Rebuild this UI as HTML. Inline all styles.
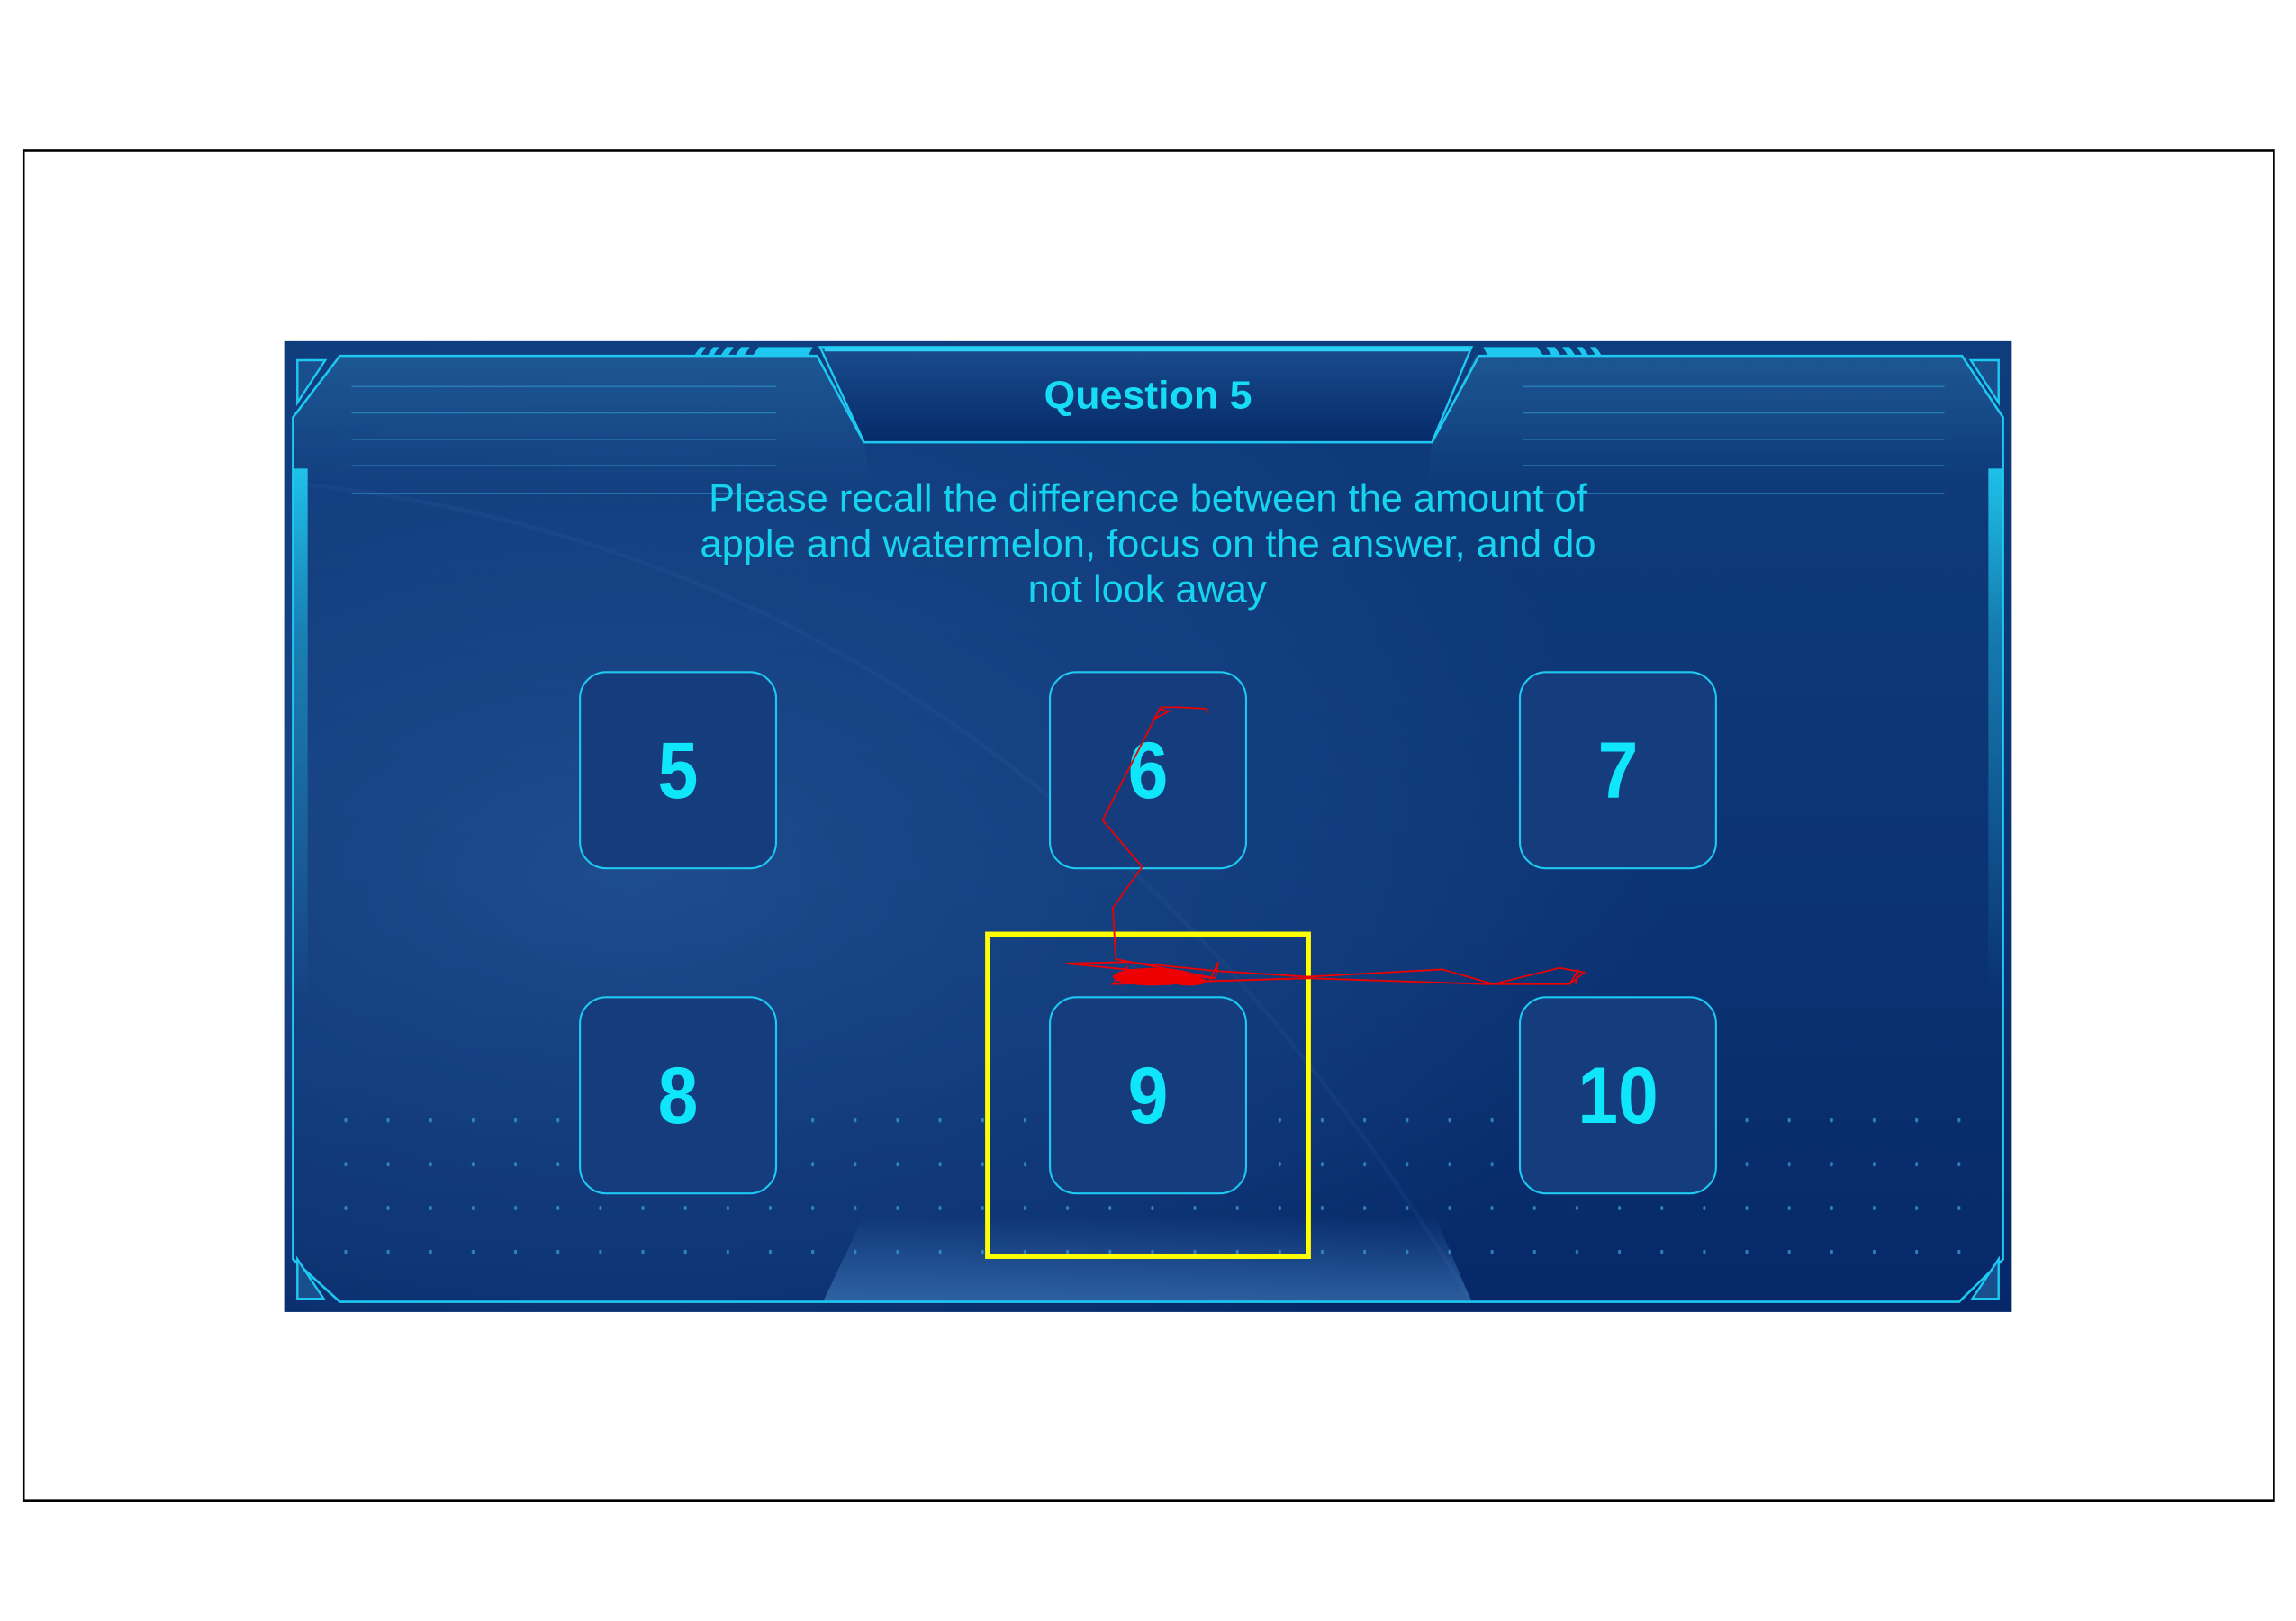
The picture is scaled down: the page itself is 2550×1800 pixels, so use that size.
<!DOCTYPE html>
<html><head><meta charset="utf-8"><style>
html,body{margin:0;padding:0;background:#fff;}
svg{display:block;}
</style></head><body>
<svg width="2550" height="1800" viewBox="0 0 1568 1107" xmlns="http://www.w3.org/2000/svg">
<defs>
<linearGradient id="bg" x1="0" y1="0" x2="0" y2="1">
<stop offset="0" stop-color="#0f3c7c"/><stop offset="0.6" stop-color="#0b3373"/><stop offset="1" stop-color="#062868"/>
</linearGradient>
<radialGradient id="planet" cx="0.2" cy="0.55" r="0.6">
<stop offset="0" stop-color="#2a5c9c" stop-opacity="0.6"/><stop offset="0.7" stop-color="#1d4b8c" stop-opacity="0.35"/><stop offset="1" stop-color="#1d4b8c" stop-opacity="0"/>
</radialGradient>
<linearGradient id="wing" x1="0" y1="0" x2="0" y2="1">
<stop offset="0" stop-color="#2a72a8" stop-opacity="0.5"/><stop offset="1" stop-color="#2a72a8" stop-opacity="0"/>
</linearGradient>
<linearGradient id="bar" x1="0" y1="0" x2="0" y2="1">
<stop offset="0" stop-color="#1fd0f5" stop-opacity="0.9"/><stop offset="0.3" stop-color="#1fd0f5" stop-opacity="0.45"/><stop offset="1" stop-color="#1fd0f5" stop-opacity="0"/>
</linearGradient>
<linearGradient id="glow" x1="0" y1="0" x2="0" y2="1">
<stop offset="0" stop-color="#4a8acb" stop-opacity="0"/><stop offset="1" stop-color="#4a8acb" stop-opacity="0.55"/>
</linearGradient>
<linearGradient id="tab" x1="0" y1="0" x2="0" y2="1">
<stop offset="0" stop-color="#1a4c8c"/><stop offset="1" stop-color="#062a6a"/>
</linearGradient>
<pattern id="dots" x="235" y="0" width="29" height="30" patternUnits="userSpaceOnUse">
<ellipse cx="1" cy="15" rx="1" ry="1.6" fill="#3fa6d8" opacity="0.7"/>
</pattern>
</defs>

<rect x="16" y="103" width="1537" height="922" fill="#fff" stroke="#000" stroke-width="1.6"/>

<rect x="194" y="233" width="1180" height="663" fill="url(#bg)"/>
<rect x="194" y="233" width="1180" height="663" fill="url(#planet)"/>
<path d="M200 330 Q700 380 1005 889" fill="none" stroke="#3a6cab" stroke-width="3" opacity="0.12"/>

<rect x="230" y="750" width="1110" height="120" fill="url(#dots)"/>

<polygon points="232,243 558,243 590,302 595,330 200,330 200,285" fill="url(#wing)"/>
<polygon points="1008,243 1340,243 1368,285 1368,330 975,330 978,302" fill="url(#wing)"/>

<g stroke="#2b86bc" stroke-width="1" opacity="0.8">
<line x1="240" y1="264" x2="530" y2="264"/><line x1="240" y1="282" x2="530" y2="282"/>
<line x1="240" y1="300" x2="530" y2="300"/><line x1="240" y1="318" x2="530" y2="318"/>
<line x1="240" y1="337" x2="530" y2="337"/>
<line x1="1040" y1="264" x2="1328" y2="264"/><line x1="1040" y1="282" x2="1328" y2="282"/>
<line x1="1040" y1="300" x2="1328" y2="300"/><line x1="1040" y1="318" x2="1328" y2="318"/>
<line x1="1040" y1="337" x2="1328" y2="337"/>
</g>

<polygon points="590,830 980,830 1005,889 562,889" fill="url(#glow)"/>

<polygon points="232,243 558,243 590,302 978,302 1010,243 1340,243 1368,285 1368,860 1338,889 232,889 200,860 200,285" fill="none" stroke="#1ec8f0" stroke-width="1.6"/>
<rect x="200" y="320" width="10" height="360" fill="url(#bar)"/>
<rect x="1358" y="320" width="10" height="360" fill="url(#bar)"/>

<g fill="#1a4f8e" stroke="#1ec8f0" stroke-width="1.5">
<polygon points="203,246 222,246 203,275"/>
<polygon points="203,860 203,887 221,887"/>
<polygon points="1365,246 1346,246 1365,275"/>
<polygon points="1365,860 1365,887 1347,887"/>
</g>

<g fill="#1ec8f0">
<polygon points="478,237 482,237 478,243 474,243"/>
<polygon points="487,237 491,237 487,243 483,243"/>
<polygon points="496,237 501,237 497,243 492,243"/>
<polygon points="506,237 512,237 508,243 502,243"/>
<polygon points="518,237 555,237 552,243 514,243"/>
<polygon points="1013,237 1050,237 1054,243 1016,243"/>
<polygon points="1056,237 1062,237 1066,243 1060,243"/>
<polygon points="1067,237 1072,237 1076,243 1071,243"/>
<polygon points="1077,237 1081,237 1085,243 1081,243"/>
<polygon points="1086,237 1090,237 1094,243 1090,243"/>
</g>

<polygon points="560,237 1005,237 978,302 590,302" fill="url(#tab)" stroke="#1ec8f0" stroke-width="1.5"/>
<line x1="563" y1="238.5" x2="1003" y2="238.5" stroke="#2bd0f5" stroke-width="3"/>
<text x="713" y="279" textLength="142" lengthAdjust="spacingAndGlyphs" font-family="Liberation Sans, sans-serif" font-weight="bold" font-size="27" fill="#16dcf5">Question 5</text>

<g font-family="Liberation Sans, sans-serif" font-size="26" fill="#16d4f0" lengthAdjust="spacingAndGlyphs">
<text x="484" y="349" textLength="600" lengthAdjust="spacingAndGlyphs">Please recall the difference between the amount of</text>
<text x="478" y="380" textLength="612" lengthAdjust="spacingAndGlyphs">apple and watermelon, focus on the answer, and do</text>
<text x="702" y="411" textLength="163" lengthAdjust="spacingAndGlyphs">not look away</text>
</g>

<g fill="#153d7e" stroke="#1ec8f0" stroke-width="1.3">
<rect x="396" y="459" width="134" height="134" rx="18"/>
<rect x="717" y="459" width="134" height="134" rx="18"/>
<rect x="1038" y="459" width="134" height="134" rx="18"/>
<rect x="396" y="681" width="134" height="134" rx="18"/>
<rect x="717" y="681" width="134" height="134" rx="18"/>
<rect x="1038" y="681" width="134" height="134" rx="18"/>
</g>
<g font-family="Liberation Sans, sans-serif" font-weight="bold" font-size="55" fill="#10e6fa" text-anchor="middle">
<text transform="translate(463 545) scale(0.9 1)">5</text>
<text transform="translate(784 545) scale(0.9 1)">6</text>
<text transform="translate(1105 545) scale(0.9 1)">7</text>
<text transform="translate(463 767) scale(0.9 1)">8</text>
<text transform="translate(784 767) scale(0.9 1)">9</text>
<text transform="translate(1105 767) scale(0.9 1)">10</text>
</g>

<rect x="674.5" y="638" width="219" height="220" fill="none" stroke="#ffff00" stroke-width="3.5"/>

<g fill="none" stroke="#ee0000" stroke-width="1.1">
<polyline points="825,487 824,484 805,483 793,483 788,491 798,486 792,484 753,560 780,592 760,620 762,655 830,668 728,658 770,657 830,663 893,667 985,662 1020,672 1065,661 1082,664 1072,672 1015,672 893,668 760,672 770,660"/>
<polyline points="830,668 832,657 826,670 893,668"/>
<polyline points="1072,672 1078,662 1076,672"/>
</g>
<ellipse cx="788" cy="667" rx="28" ry="6" fill="#ee0000"/>
<ellipse cx="812" cy="670" rx="12" ry="3" fill="#ee0000"/>
</svg>
</body></html>
